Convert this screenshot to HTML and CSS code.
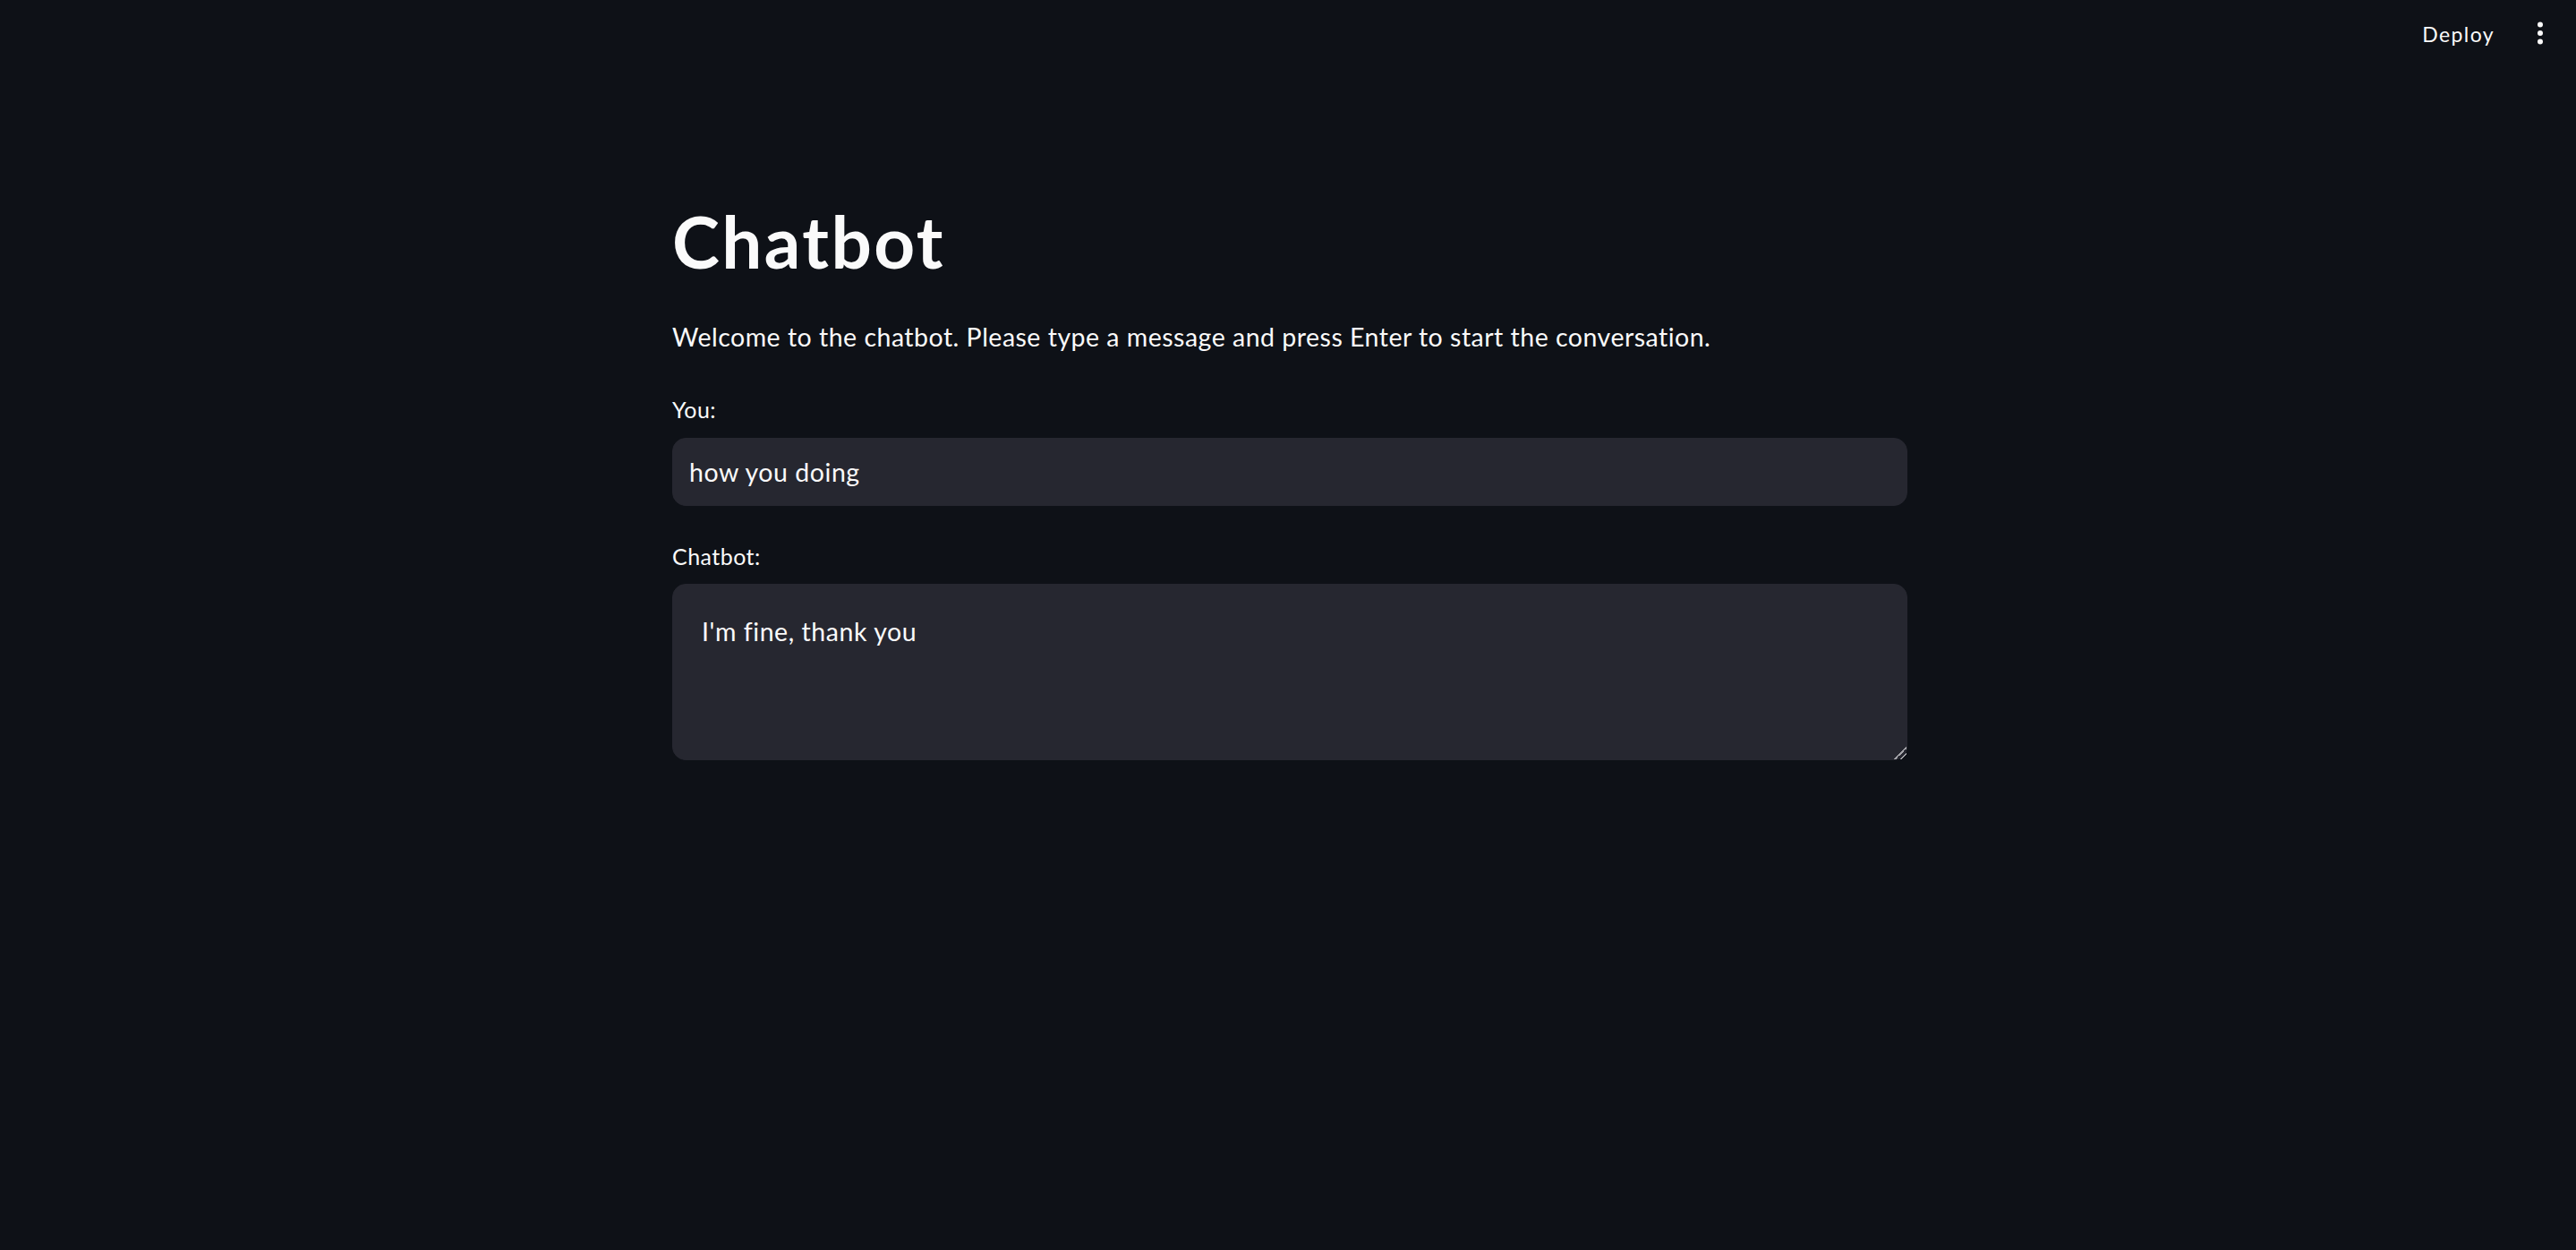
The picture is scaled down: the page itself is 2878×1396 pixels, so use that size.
FILE: index.html
```html
<!DOCTYPE html>
<html lang="en">
<head>
<meta charset="utf-8">
<title>Chatbot</title>
<link rel="stylesheet" href="styles.css">
</head>
<body>
<header class="app-header">
  <button class="deploy-btn" type="button">Deploy</button>
  <button class="menu-btn" type="button" aria-label="Main menu">
    <svg class="menu-icon" viewBox="0 0 30 30" width="30" height="30" aria-hidden="true">
      <circle cx="15" cy="4.5" r="3" fill="#fafafa"/>
      <circle cx="15" cy="14" r="3" fill="#fafafa"/>
      <circle cx="15" cy="23.5" r="3" fill="#fafafa"/>
    </svg>
  </button>
</header>
<main class="main-block">
  <h1 class="title">Chatbot</h1>
  <p class="intro">Welcome to the chatbot. Please type a message and press Enter to start the conversation.</p>
  <label class="field-label label-you" for="you">You:</label>
  <input class="text-input" id="you" type="text" value="how you doing">
  <label class="field-label label-bot" for="bot">Chatbot:</label>
  <textarea class="text-area" id="bot" readonly>I'm fine, thank you</textarea>
</main>
</body>
</html>
```
FILE: styles.css
```css
html {
  color-scheme: dark;
}
body {
  margin: 0;
  min-height: 1396px;
  background: #0e1117;
  color: #fafafa;
  font-family: Lato, "Noto Sans", sans-serif;
}
.app-header {
  display: flex;
  justify-content: flex-end;
  align-items: center;
  height: 75px;
  padding-right: 25px;
  gap: 36px;
}
.deploy-btn {
  background: none;
  border: none;
  padding: 0;
  color: #fafafa;
  font-family: Lato, "Noto Sans", sans-serif;
  font-size: 23px;
  letter-spacing: 1.4px;
  line-height: 40px;
}
.menu-btn {
  background: none;
  border: none;
  padding: 0;
  width: 30px;
  height: 30px;
  display: flex;
}
.main-block {
  width: 1380px;
  margin: 0 auto;
  padding-left: 4px;
  padding-top: 146px;
  display: flex;
  flex-direction: column;
}
.title {
  margin: 0;
  font-size: 80px;
  line-height: 96px;
  font-weight: 700;
  letter-spacing: 2.4px;
  color: #fafafa;
}
.intro {
  margin: 38px 0 0;
  font-size: 28.5px;
  letter-spacing: 0.49px;
  line-height: 42px;
}
.field-label {
  font-size: 25px;
  letter-spacing: 0.45px;
  line-height: 30px;
}
.label-you {
  margin-top: 45px;
}
.label-bot {
  margin-top: 41px;
}
.text-input {
  margin-top: 17px;
  box-sizing: border-box;
  height: 76px;
  width: 100%;
  border: 1px solid #262730;
  border-radius: 15px;
  background: #262730;
  color: #fafafa;
  font-family: Lato, "Noto Sans", sans-serif;
  font-size: 28.5px;
  letter-spacing: 0.55px;
  padding: 0 18px;
  outline: none;
}
.text-area {
  margin-top: 16px;
  box-sizing: border-box;
  height: 197px;
  width: 100%;
  border: 1px solid #262730;
  border-radius: 15px;
  background: #262730;
  color: #fafafa;
  font-family: Lato, "Noto Sans", sans-serif;
  font-size: 28.5px;
  letter-spacing: 0.55px;
  line-height: 42px;
  padding: 31px 32px;
  resize: vertical;
  outline: none;
}
.text-area::-webkit-resizer {
  background: linear-gradient(135deg,
    transparent 0 52%, #a3a3a8 52% 60%,
    transparent 60% 74%, #a3a3a8 74% 82%,
    transparent 82% 100%);
}
```
